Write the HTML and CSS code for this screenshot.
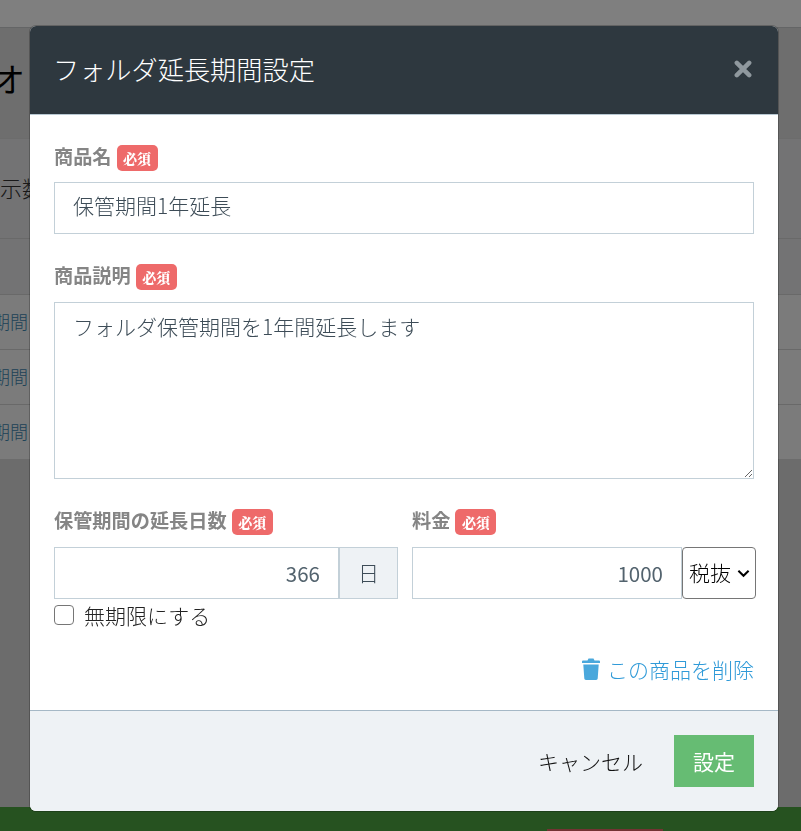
FILE: index.html
```html
<!DOCTYPE html>
<html lang="ja">
<head>
<meta charset="utf-8">
<title>フォルダ延長期間設定</title>
<link rel="stylesheet" href="styles.css">
</head>
<body>
<div class="page">
  <div class="topbar"></div>
  <div class="title-band"><h1 class="page-title">オ</h1></div>
  <div class="filter-band"><span class="filter-text">示数</span></div>
  <div class="table-panel">
    <div class="table-head"></div>
    <div class="table-row"><a class="row-link">期間</a></div>
    <div class="table-row"><a class="row-link">期間</a></div>
    <div class="table-row"><a class="row-link">期間</a></div>
  </div>
  <div class="page-spacer"></div>
  <div class="action-bar"><div class="action-red"></div></div>
</div>
<div class="backdrop"></div>
<section class="modal">
  <header class="modal-header">
    <h2 class="modal-title">フォルダ延長期間設定</h2>
    <svg class="close-icon" viewBox="0 0 16 16" aria-hidden="true"><path d="M2.500 2.500 L13.500 13.500 M13.500 2.500 L2.500 13.500"/></svg>
  </header>
  <div class="modal-body">
    <div class="field field-name">
      <div class="label-row"><label class="label">商品名</label><span class="req">必須</span></div>
      <input class="input" type="text" value="保管期間1年延長">
    </div>
    <div class="field field-desc">
      <div class="label-row"><label class="label">商品説明</label><span class="req">必須</span></div>
      <textarea class="input textarea">フォルダ保管期間を1年間延長します</textarea>
    </div>
    <div class="two-col">
      <div class="col-days">
        <div class="label-row"><label class="label">保管期間の延長日数</label><span class="req">必須</span></div>
        <div class="input-group">
          <input class="input num" type="text" value="366">
          <span class="addon">日</span>
        </div>
        <label class="check-row"><input class="check" type="checkbox"><span>無期限にする</span></label>
      </div>
      <div class="col-fee">
        <div class="label-row"><label class="label">料金</label><span class="req">必須</span></div>
        <div class="input-group">
          <input class="input num" type="text" value="1000">
          <div class="tax-wrap">
            <select class="tax"><option>税抜</option></select>
            <svg class="tax-arrow" viewBox="0 0 14 9" aria-hidden="true"><path d="M1.500 1.500 L7 7 L12.500 1.500"/></svg>
          </div>
        </div>
      </div>
    </div>
    <div class="delete-row">
      <a class="delete-link">
        <svg class="trash" viewBox="0 0 18 22" aria-hidden="true"><path d="M6.500 0.500h5l1 2H17a1 1 0 0 1 1 1V5H0V3.500a1 1 0 0 1 1-1h4.500z"/><path d="M1.300 6.500h15.400l-1 14a1.600 1.600 0 0 1-1.600 1.500H3.900a1.600 1.600 0 0 1-1.600-1.500z"/></svg>
        <span>この商品を削除</span>
      </a>
    </div>
  </div>
  <footer class="modal-footer">
    <a class="cancel">キャンセル</a>
    <button class="submit" type="button">設定</button>
  </footer>
</section>
</body>
</html>
```
FILE: styles.css
```css
* { box-sizing: border-box; }
html, body { margin: 0; height: 100%; overflow: hidden; }
body { font-family: "Noto Sans CJK JP", "Noto Sans", sans-serif; color: #2f3a40; }

.page { height: 831px; display: flex; flex-direction: column; background: #fff; }
.topbar { height: 28px; background: #fff; border-bottom: 1px solid #c8cbcd; flex: none; }
.title-band { height: 110px; flex: none; background: #dcdcdc; padding-top: 28px; overflow: hidden; }
.page-title { margin: 0 0 0 -8px; font-size: 33px; line-height: 44px; font-weight: 400; color: #000; white-space: nowrap; }
.filter-band { height: 100px; flex: none; background: #e6e7e8; border-top: 1px solid #d8d8d8; padding-top: 30px; overflow: hidden; }
.filter-text { font-size: 22px; line-height: 36px; font-weight: 300; color: #333; }
.table-panel { flex: none; background: #f6f6f6; border-top: 1px solid #d2d2d2; }
.table-head { height: 55px; background: #e6e7e8; }
.table-row { height: 55px; border-top: 1px solid #d2d2d2; padding-top: 13px; overflow: hidden; }
.row-link { font-size: 18px; line-height: 27px; font-weight: 300; color: #3e86b0; margin-left: -8px; }
.page-spacer { flex: 1; background: #d8d8d8; }
.action-bar { height: 24px; flex: none; background: #4ca440; }
.action-red { width: 116px; height: 2px; margin: 22px 0 0 547px; background: #e66666; }

.backdrop { position: fixed; inset: 0; background: rgba(0, 0, 0, 0.5); }

.modal {
  position: fixed; left: 30px; top: 26px; width: 748px; height: 785px;
  background: #fff; border-radius: 6px; overflow: hidden;
  display: flex; flex-direction: column;
  box-shadow: 0 0 0 1px rgba(0, 0, 0, 0.22);
}
.modal-header {
  height: 89px; flex: none; background: #2e383f; border-bottom: 1px solid #b8c8d2;
  display: flex; align-items: center; justify-content: space-between; padding: 0 26px 3px 23px;
}
.modal-title { margin: 0; font-size: 26.2px; font-weight: 300; line-height: 38px; color: #fff; }
.close-icon { width: 18px; height: 18px; fill: none; stroke: #8f989e; stroke-width: 4; stroke-linecap: round; }

.modal-body { flex: 1; padding: 29px 24px 0; }
.field-name { height: 119px; }
.field-desc { height: 245px; }
.label-row { display: flex; align-items: center; height: 27px; margin-bottom: 12px; }
.field-name .label-row { margin-bottom: 11px; }
.label { font-size: 19.200px; font-weight: 700; color: #858585; line-height: 24px; padding-bottom: 4px; }
.req {
  margin-left: 5px; width: 41px; height: 26px; border-radius: 5px; background: #ee6a6a;
  color: #fff; font-family: "Noto Serif CJK JP", "Noto Sans CJK JP", serif; font-size: 14px; font-weight: 900;
  line-height: 26px; text-align: center;
}
.input {
  display: block; width: 100%; height: 52px; border: 1px solid #c3d0d8; border-radius: 0;
  background: #fff; padding: 0 18px; font: inherit; font-size: 21px; font-weight: 300; color: #3d4c57; outline: none;
}
.field-name .input { padding-bottom: 6px; }
.textarea { height: 177px; padding: 5px 18px; line-height: 36px; resize: vertical; }
.two-col { display: flex; gap: 14px; }
.col-days { width: 344px; flex: none; }
.col-fee { flex: 1; margin-right: -2px; min-width: 0; }
.input-group { display: flex; height: 52px; }
.num { text-align: right; flex: 1; min-width: 0; width: auto; padding-right: 18px; font-size: 20.500px; font-weight: 400; color: #53636e; }
.addon {
  width: 59px; flex: none; background: #eef2f5; border: 1px solid #c3d0d8; margin-left: 0; padding-bottom: 2px;
  display: flex; align-items: center; justify-content: center; font-size: 21px; font-weight: 300; color: #3d4c57;
}
.tax-wrap { position: relative; width: 74px; flex: none; }
.tax {
  appearance: none; display: block; width: 100%; height: 52px; border: 1px solid #767676; border-radius: 4px;
  background: #fff; font: inherit; font-size: 21px; font-weight: 300; color: #000; padding: 0 0 2px 6px;
}
.tax-arrow {
  position: absolute; right: 6px; top: 22px; width: 13px; height: 9px;
  fill: none; stroke: #000; stroke-width: 2.200; pointer-events: none;
}
.check-row { display: flex; align-items: center; gap: 10px; height: 28px; margin-top: 2px; font-size: 21px; font-weight: 300; color: #222; }
.check {
  appearance: none; width: 20px; height: 20px; margin: 0; background: #fff;
  border: 1.500px solid #767676; border-radius: 4px;
}
.delete-row { display: flex; justify-content: flex-end; margin-top: 25px; }
.delete-link { display: flex; align-items: center; gap: 7px; font-size: 21px; font-weight: 300; line-height: 30px; color: #2f9ad8; }
.trash { width: 18px; height: 22px; fill: #4aa8dc; }

.modal-footer {
  height: 101px; flex: none; background: #eef2f5; border-top: 1px solid #a5b8c6;
  display: flex; align-items: center; justify-content: flex-end; padding: 0 24px 0 0;
}
.cancel { font-size: 21px; font-weight: 300; color: #111; margin-right: 31px; }
.submit {
  width: 80px; height: 52px; background: #66bc73; border: 0; color: #fff;
  font: inherit; font-size: 21px; font-weight: 400; padding: 0;
}
```
